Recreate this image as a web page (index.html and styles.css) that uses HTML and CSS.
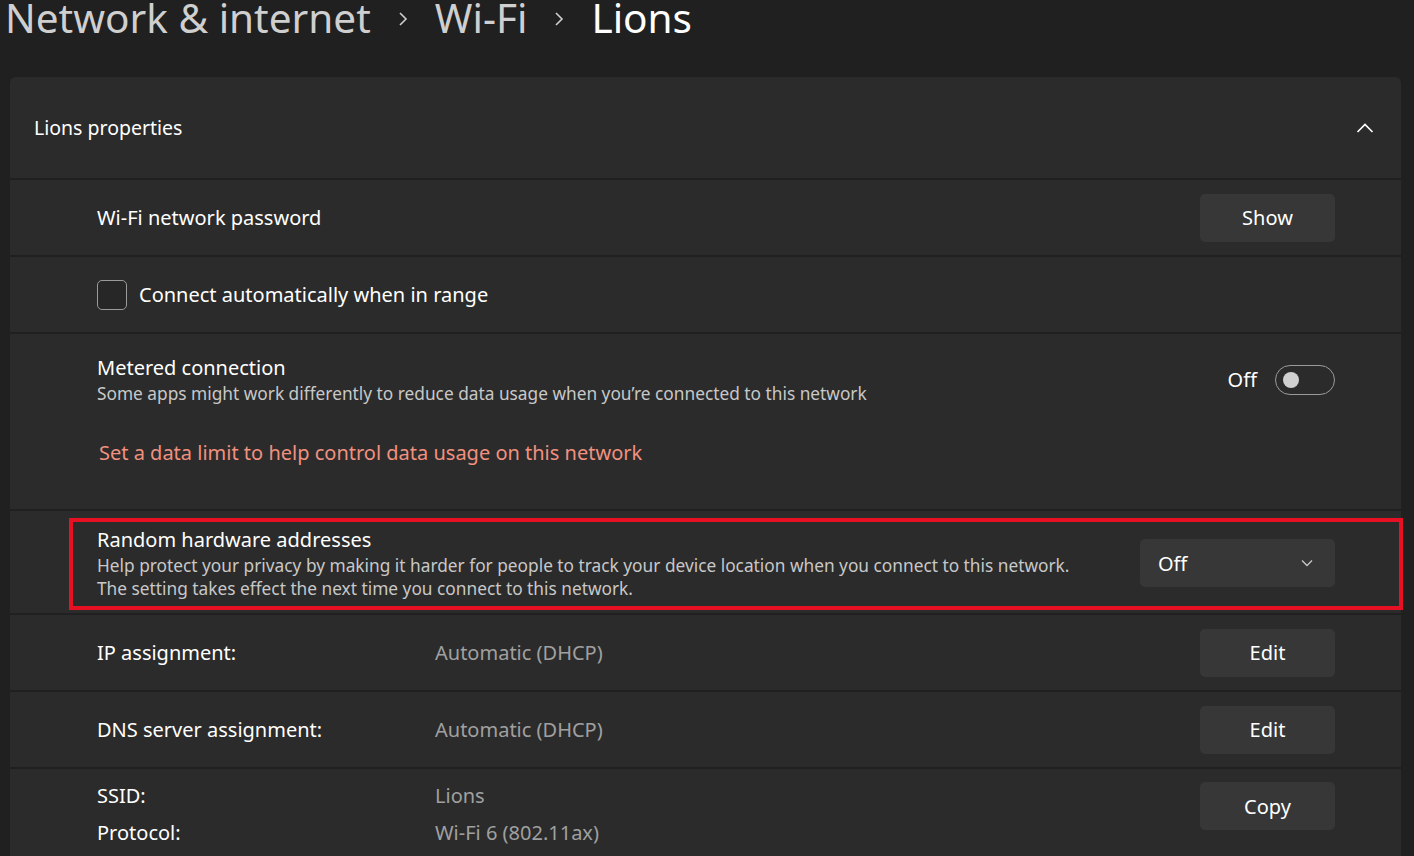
FILE: index.html
```html
<!DOCTYPE html>
<html lang="en">

<head>
    <meta charset="UTF-8">
    <meta name="viewport" content="width=device-width, initial-scale=1.0">
    <title>Lions properties</title>
    <link rel="stylesheet" href="styles.css">
</head>

<body>
    <header class="page-header">
        <h1 class="breadcrumb">
            <span class="crumb">Network &amp; internet</span>
            <svg class="crumb-sep" width="10" height="16" viewBox="0 0 10 16">
                <path d="M2 2 L8 8 L2 14" fill="none" stroke="#cfcfcf" stroke-width="1.6" />
            </svg>
            <span class="crumb">Wi-Fi</span>
            <svg class="crumb-sep" width="10" height="16" viewBox="0 0 10 16">
                <path d="M2 2 L8 8 L2 14" fill="none" stroke="#cfcfcf" stroke-width="1.6" />
            </svg>
            <span class="crumb current">Lions</span>
        </h1>
    </header>

    <main class="card">
        <div class="card-head">
            <span class="card-title">Lions properties</span>
            <svg class="expand-icon" width="18" height="12" viewBox="0 0 18 12">
                <path d="M1.5 10 L9 2.5 L16.5 10" fill="none" stroke="#ffffff" stroke-width="1.6" />
            </svg>
        </div>

        <div class="row">
            <span class="row-label">Wi-Fi network password</span>
            <button class="btn">Show</button>
        </div>

        <div class="row">
            <label class="check">
                <span class="check-box"></span>
                <span class="row-label">Connect automatically when in range</span>
            </label>
        </div>

        <div class="row row-metered">
            <div class="setting">
                <div class="setting-text">
                    <span class="row-label">Metered connection</span>
                    <span class="row-desc">Some apps might work differently to reduce data usage when you’re connected to this network</span>
                </div>
                <div class="toggle-wrap">
                    <span class="toggle-state">Off</span>
                    <span class="toggle"><span class="toggle-knob"></span></span>
                </div>
            </div>
            <a class="row-link" href="#">Set a data limit to help control data usage on this network</a>
        </div>

        <div class="row row-random">
            <div class="setting-text">
                <span class="row-label">Random hardware addresses</span>
                <span class="row-desc">Help protect your privacy by making it harder for people to track your device location when you connect to this network.</span>
                <span class="row-desc">The setting takes effect the next time you connect to this network.</span>
            </div>
            <div class="dropdown">
                <span>Off</span>
                <svg width="12" height="8" viewBox="0 0 12 8">
                    <path d="M1 1.5 L6 6.5 L11 1.5" fill="none" stroke="#c8c8c8" stroke-width="1.3" />
                </svg>
            </div>
            <div class="highlight"></div>
        </div>

        <div class="row">
            <div class="prop">
                <span class="row-label">IP assignment:</span>
                <span class="prop-value">Automatic (DHCP)</span>
            </div>
            <button class="btn">Edit</button>
        </div>

        <div class="row">
            <div class="prop">
                <span class="row-label">DNS server assignment:</span>
                <span class="prop-value">Automatic (DHCP)</span>
            </div>
            <button class="btn">Edit</button>
        </div>

        <div class="row row-props">
            <div class="prop-list">
                <div class="prop">
                    <span class="row-label">SSID:</span>
                    <span class="prop-value">Lions</span>
                </div>
                <div class="prop">
                    <span class="row-label">Protocol:</span>
                    <span class="prop-value">Wi-Fi 6 (802.11ax)</span>
                </div>
            </div>
            <button class="btn">Copy</button>
        </div>
    </main>
</body>

</html>
```

FILE: styles.css
```css
* {
    box-sizing: border-box;
}

body {
    margin: 0;
    padding: 0;
    height: 856px;
    overflow: hidden;
    background-color: #202020;
    color: #ffffff;
    font-family: "Noto Sans", "Open Sans", sans-serif;
    font-size: 20px;
}

.page-header {
    height: 77px;
    padding: 1px 0 0 5px;
}

.breadcrumb {
    margin: 0;
    display: flex;
    align-items: center;
    gap: 27px;
    font-size: 40.5px;
    font-weight: 400;
    line-height: 34px;
}

.crumb {
    color: #cfcfcf;
}

.crumb.current {
    color: #ffffff;
}

.crumb-sep {
    flex-shrink: 0;
    margin-top: 1px;
}

.card {
    margin: 0 13px 0 10px;
    display: flex;
    flex-direction: column;
    gap: 2px;
}

.card-head {
    height: 101px;
    padding: 0 27px 0 24px;
    display: flex;
    align-items: center;
    justify-content: space-between;
    background-color: #2b2b2b;
    border-radius: 6px 6px 0 0;
}

.card-title {
    font-size: 19.5px;
}

.row {
    position: relative;
    min-height: 75px;
    padding: 0 66px 0 87px;
    display: flex;
    align-items: center;
    justify-content: space-between;
    background-color: #2b2b2b;
}

.row-label {
    font-size: 20px;
    line-height: 28px;
}

.row-desc {
    font-size: 17.3px;
    line-height: 23px;
    color: #c8c8c8;
}

.btn {
    width: 135px;
    height: 48px;
    border: none;
    border-radius: 5px;
    background-color: #373737;
    color: #ffffff;
    font-family: inherit;
    font-size: 20px;
    cursor: pointer;
}

.check {
    display: flex;
    align-items: center;
    gap: 12px;
}

.check-box {
    width: 30px;
    height: 30px;
    border: 1.5px solid #9a9a9a;
    border-radius: 5px;
    background-color: #272727;
}

.row-metered {
    height: 175px;
    padding-top: 20px;
    flex-direction: column;
    align-items: stretch;
    justify-content: flex-start;
}

.setting {
    display: flex;
    align-items: center;
    justify-content: space-between;
}

.setting-text {
    display: flex;
    flex-direction: column;
}

.toggle-wrap {
    display: flex;
    align-items: center;
    gap: 18px;
}

.toggle-state {
    font-size: 20px;
}

.toggle {
    width: 60px;
    height: 30px;
    padding-left: 7px;
    display: flex;
    align-items: center;
    border: 1.5px solid #9b9b9b;
    border-radius: 15px;
}

.toggle-knob {
    width: 16px;
    height: 16px;
    border-radius: 50%;
    background-color: #d0d0d0;
}

.row-link {
    margin-top: 34px;
    margin-left: 2px;
    font-size: 20px;
    line-height: 28px;
    color: #f1917f;
    text-decoration: none;
}

.row-random {
    height: 102px;
    padding-top: 2px;
}

.dropdown {
    width: 195px;
    height: 48px;
    padding: 0 22px 0 18px;
    display: flex;
    align-items: center;
    justify-content: space-between;
    border-radius: 5px;
    background-color: #373737;
    font-size: 20px;
}

/* red annotation box drawn over the screenshot */
.highlight {
    position: absolute;
    top: 7px;
    right: -2px;
    bottom: 3px;
    left: 59px;
    border: 4px solid #e81123;
    pointer-events: none;
}

.prop {
    display: grid;
    grid-template-columns: 338px auto;
    align-items: center;
}

.prop-value {
    font-size: 20px;
    line-height: 28px;
    color: #a0a0a0;
}

.row-props {
    height: 100px;
    padding-top: 13px;
    align-items: flex-start;
}

.prop-list {
    display: flex;
    flex-direction: column;
    gap: 9px;
}
```
